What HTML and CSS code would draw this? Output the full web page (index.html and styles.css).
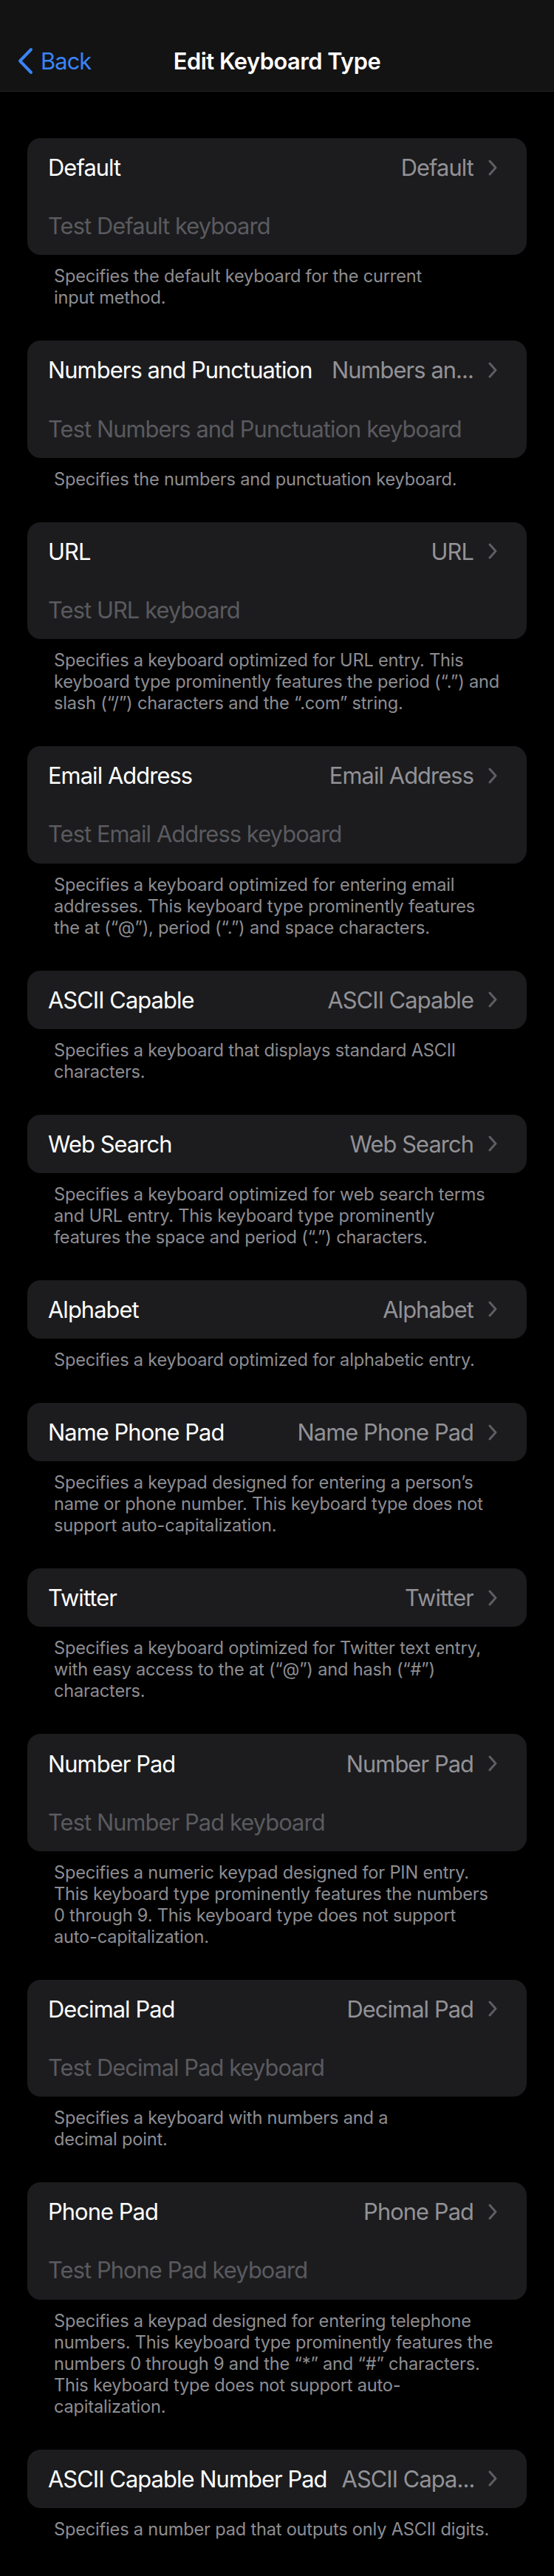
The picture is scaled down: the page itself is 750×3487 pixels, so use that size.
FILE: index.html
```html
<!DOCTYPE html>
<html lang="en">
<head>
<meta charset="utf-8">
<title>Edit Keyboard Type</title>
<link rel="stylesheet" href="styles.css">
</head>
<body>
<header class="nav">
  <a class="back" href="#">
    <svg class="back-icon" viewBox="0 0 22 37" width="22" height="37"><path d="M19 3 L4 18.5 L19 34" fill="none" stroke="currentColor" stroke-width="4" stroke-linecap="round" stroke-linejoin="round"/></svg>
    <span>Back</span>
  </a>
  <h1 class="title">Edit Keyboard Type</h1>
</header>
<main class="list">
  <section class="group">
    <div class="card">
      <div class="row"><span class="label">Default</span><span class="value">Default</span><svg class="chev" viewBox="0 0 12 22" width="12" height="22"><path d="M2 2 L10 11 L2 20" fill="none" stroke="currentColor" stroke-width="3" stroke-linecap="round" stroke-linejoin="round"/></svg></div>
      <div class="row field">Test Default keyboard</div>
    </div>
    <p class="note">Specifies the default keyboard for the current<br>input method.</p>
  </section>

  <section class="group">
    <div class="card">
      <div class="row"><span class="label">Numbers and Punctuation</span><span class="value">Numbers an...</span><svg class="chev" viewBox="0 0 12 22" width="12" height="22"><path d="M2 2 L10 11 L2 20" fill="none" stroke="currentColor" stroke-width="3" stroke-linecap="round" stroke-linejoin="round"/></svg></div>
      <div class="row field">Test Numbers and Punctuation keyboard</div>
    </div>
    <p class="note">Specifies the numbers and punctuation keyboard.</p>
  </section>

  <section class="group">
    <div class="card">
      <div class="row"><span class="label">URL</span><span class="value">URL</span><svg class="chev" viewBox="0 0 12 22" width="12" height="22"><path d="M2 2 L10 11 L2 20" fill="none" stroke="currentColor" stroke-width="3" stroke-linecap="round" stroke-linejoin="round"/></svg></div>
      <div class="row field">Test URL keyboard</div>
    </div>
    <p class="note">Specifies a keyboard optimized for URL entry. This<br>keyboard type prominently features the period (“.”) and<br>slash (“/”) characters and the “.com” string.</p>
  </section>

  <section class="group">
    <div class="card">
      <div class="row"><span class="label">Email Address</span><span class="value">Email Address</span><svg class="chev" viewBox="0 0 12 22" width="12" height="22"><path d="M2 2 L10 11 L2 20" fill="none" stroke="currentColor" stroke-width="3" stroke-linecap="round" stroke-linejoin="round"/></svg></div>
      <div class="row field">Test Email Address keyboard</div>
    </div>
    <p class="note">Specifies a keyboard optimized for entering email<br>addresses. This keyboard type prominently features<br>the at (“@”), period (“.”) and space characters.</p>
  </section>

  <section class="group">
    <div class="card">
      <div class="row"><span class="label">ASCII Capable</span><span class="value">ASCII Capable</span><svg class="chev" viewBox="0 0 12 22" width="12" height="22"><path d="M2 2 L10 11 L2 20" fill="none" stroke="currentColor" stroke-width="3" stroke-linecap="round" stroke-linejoin="round"/></svg></div>
    </div>
    <p class="note">Specifies a keyboard that displays standard ASCII<br>characters.</p>
  </section>

  <section class="group">
    <div class="card">
      <div class="row"><span class="label">Web Search</span><span class="value">Web Search</span><svg class="chev" viewBox="0 0 12 22" width="12" height="22"><path d="M2 2 L10 11 L2 20" fill="none" stroke="currentColor" stroke-width="3" stroke-linecap="round" stroke-linejoin="round"/></svg></div>
    </div>
    <p class="note">Specifies a keyboard optimized for web search terms<br>and URL entry. This keyboard type prominently<br>features the space and period (“.”) characters.</p>
  </section>

  <section class="group">
    <div class="card">
      <div class="row"><span class="label">Alphabet</span><span class="value">Alphabet</span><svg class="chev" viewBox="0 0 12 22" width="12" height="22"><path d="M2 2 L10 11 L2 20" fill="none" stroke="currentColor" stroke-width="3" stroke-linecap="round" stroke-linejoin="round"/></svg></div>
    </div>
    <p class="note">Specifies a keyboard optimized for alphabetic entry.</p>
  </section>

  <section class="group">
    <div class="card">
      <div class="row"><span class="label">Name Phone Pad</span><span class="value">Name Phone Pad</span><svg class="chev" viewBox="0 0 12 22" width="12" height="22"><path d="M2 2 L10 11 L2 20" fill="none" stroke="currentColor" stroke-width="3" stroke-linecap="round" stroke-linejoin="round"/></svg></div>
    </div>
    <p class="note">Specifies a keypad designed for entering a person’s<br>name or phone number. This keyboard type does not<br>support auto-capitalization.</p>
  </section>

  <section class="group">
    <div class="card">
      <div class="row"><span class="label">Twitter</span><span class="value">Twitter</span><svg class="chev" viewBox="0 0 12 22" width="12" height="22"><path d="M2 2 L10 11 L2 20" fill="none" stroke="currentColor" stroke-width="3" stroke-linecap="round" stroke-linejoin="round"/></svg></div>
    </div>
    <p class="note">Specifies a keyboard optimized for Twitter text entry,<br>with easy access to the at (“@”) and hash (“#”)<br>characters.</p>
  </section>

  <section class="group">
    <div class="card">
      <div class="row"><span class="label">Number Pad</span><span class="value">Number Pad</span><svg class="chev" viewBox="0 0 12 22" width="12" height="22"><path d="M2 2 L10 11 L2 20" fill="none" stroke="currentColor" stroke-width="3" stroke-linecap="round" stroke-linejoin="round"/></svg></div>
      <div class="row field">Test Number Pad keyboard</div>
    </div>
    <p class="note">Specifies a numeric keypad designed for PIN entry.<br>This keyboard type prominently features the numbers<br>0 through 9. This keyboard type does not support<br>auto-capitalization.</p>
  </section>

  <section class="group">
    <div class="card">
      <div class="row"><span class="label">Decimal Pad</span><span class="value">Decimal Pad</span><svg class="chev" viewBox="0 0 12 22" width="12" height="22"><path d="M2 2 L10 11 L2 20" fill="none" stroke="currentColor" stroke-width="3" stroke-linecap="round" stroke-linejoin="round"/></svg></div>
      <div class="row field">Test Decimal Pad keyboard</div>
    </div>
    <p class="note">Specifies a keyboard with numbers and a<br>decimal point.</p>
  </section>

  <section class="group">
    <div class="card">
      <div class="row"><span class="label">Phone Pad</span><span class="value">Phone Pad</span><svg class="chev" viewBox="0 0 12 22" width="12" height="22"><path d="M2 2 L10 11 L2 20" fill="none" stroke="currentColor" stroke-width="3" stroke-linecap="round" stroke-linejoin="round"/></svg></div>
      <div class="row field">Test Phone Pad keyboard</div>
    </div>
    <p class="note">Specifies a keypad designed for entering telephone<br>numbers. This keyboard type prominently features the<br>numbers 0 through 9 and the “*” and “#” characters.<br>This keyboard type does not support auto-<br>capitalization.</p>
  </section>

  <section class="group">
    <div class="card">
      <div class="row"><span class="label">ASCII Capable Number Pad</span><span class="value">ASCII Capa...</span><svg class="chev" viewBox="0 0 12 22" width="12" height="22"><path d="M2 2 L10 11 L2 20" fill="none" stroke="currentColor" stroke-width="3" stroke-linecap="round" stroke-linejoin="round"/></svg></div>
    </div>
    <p class="note">Specifies a number pad that outputs only ASCII digits.</p>
  </section>
</main>
</body>
</html>
```
FILE: styles.css
```css
* { box-sizing: border-box; }

html, body {
  margin: 0;
  padding: 0;
  background: #000;
}

body {
  font-family: Inter, "Noto Sans", "Liberation Sans", sans-serif;
  color: #fff;
  -webkit-font-smoothing: antialiased;
}

.nav {
  height: 124px;
  padding-top: 42px;
  background: #131313;
  border-bottom: 1px solid #262626;
  display: grid;
  grid-template-columns: 1fr auto 1fr;
  align-items: center;
}

.back {
  grid-column: 1;
  grid-row: 1;
  display: flex;
  align-items: center;
  gap: 10px;
  padding-left: 23px;
  color: #3a84f6;
  text-decoration: none;
  font-size: 30.8px;
  letter-spacing: -0.9px;
  height: 81px;
}

.back-icon { display: block; flex: none; }

.title {
  grid-column: 2;
  grid-row: 1;
  margin: 0;
  font-size: 30.8px;
  font-weight: 600;
  letter-spacing: -0.5px;
  color: #fff;
  text-align: center;
}

.list {
  padding: 63px 37px 48px;
}

.group {
  margin-bottom: 44px;
}

.group:last-child { margin-bottom: 0; }

.card {
  background: #1c1c1e;
  border-radius: 18px;
  overflow: hidden;
}

.row {
  height: 79.2px;
  display: flex;
  align-items: center;
  padding: 0 40px 0 28px;
  font-size: 30.8px;
  letter-spacing: -0.9px;
}

.label {
  color: #fff;
  white-space: nowrap;
  flex: none;
}

.value {
  margin-left: auto;
  color: #929297;
  white-space: nowrap;
  padding-left: 20px;
  min-width: 0;
  overflow: hidden;
}

.chev {
  flex: none;
  margin-left: 20px;
  color: #5e5e63;
  display: block;
}

.field {
  color: #5a5a5f;
}

.note {
  margin: 14px 0 0;
  padding: 0 36px;
  font-size: 23.6px;
  line-height: 29px;
  color: #8d8d92;
  letter-spacing: -0.2px;
}
```
